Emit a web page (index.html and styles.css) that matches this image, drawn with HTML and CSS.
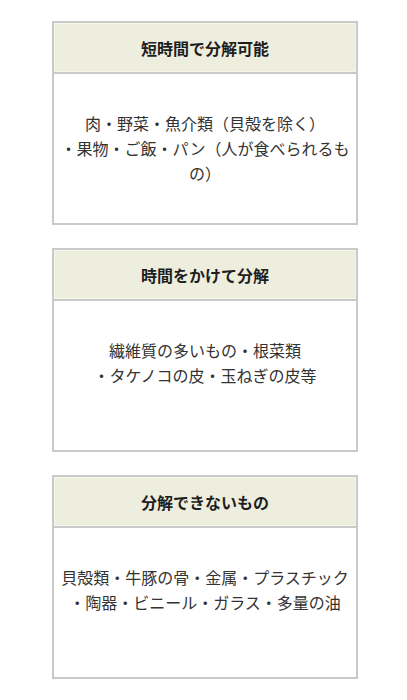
FILE: index.html
```html
<!DOCTYPE html>
<html lang="ja">
<head>
<meta charset="utf-8">
<link rel="stylesheet" href="styles.css">
</head>
<body>
<div class="page">
  <div class="card">
    <div class="card-head">短時間で分解可能</div>
    <div class="card-body"><p>肉・野菜・魚介類（貝殻を除く）<br>・果物・ご飯・パン（人が食べられるもの）</p></div>
  </div>
  <div class="card">
    <div class="card-head">時間をかけて分解</div>
    <div class="card-body"><p>繊維質の多いもの・根菜類<br>・タケノコの皮・玉ねぎの皮等<br>&nbsp;</p></div>
  </div>
  <div class="card">
    <div class="card-head">分解できないもの</div>
    <div class="card-body"><p>貝殻類・牛豚の骨・金属・プラスチック<br>・陶器・ビニール・ガラス・多量の油<br>&nbsp;</p></div>
  </div>
</div>
</body>
</html>
```

FILE: styles.css
```css
html, body {
  margin: 0;
  padding: 0;
  background: #ffffff;
}
body {
  font-family: "Noto Sans CJK JP", "Noto Sans", sans-serif;
  color: #333333;
}
.page {
  display: flex;
  flex-direction: column;
  gap: 23px;
  padding: 21px 49px 0 52px;
}
.card {
  width: 306px;
  box-sizing: border-box;
  border: 2px solid #c9c9c9;
  background: #ffffff;
}
.card-head {
  height: 49px;
  box-sizing: border-box;
  display: flex;
  align-items: center;
  justify-content: center;
  background: #eeeedf;
  box-shadow: inset 0 0 0 1px #f7f7e9;
  border-bottom: 2px solid #c9c9c9;
  font-size: 16px;
  font-weight: bold;
  color: #1e1e1e;
  height: 51px;
}
.card-body {
  height: 149px;
  display: flex;
  align-items: center;
  justify-content: center;
  padding: 0 6px;
}
.card-body p {
  margin: 0;
  font-size: 16px;
  line-height: 25px;
  text-align: center;
  color: #333333;
}
```
